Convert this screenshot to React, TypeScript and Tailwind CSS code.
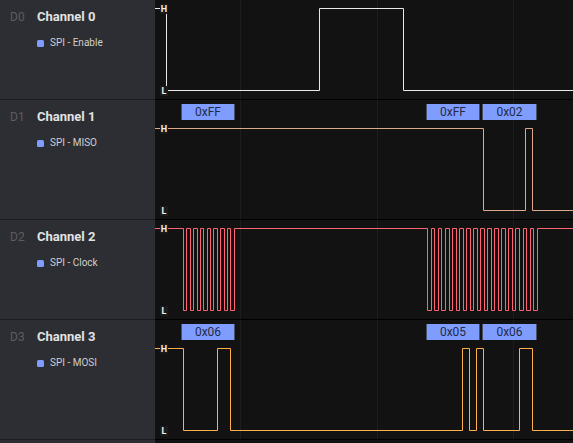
import React from "react";

type Box = { x: number; w: number; label: string };
type Row = {
  id: string;
  name: string;
  proto: string;
  height: number;
  hi: number;
  lo: number;
  color: string;
  toggles: number[];
  boxes: Box[];
};

// clock burst: low pulses of `low` px every `period` px
function clockEdges(start: number, period: number, count: number, low: number) {
  const out: number[] = [];
  for (let i = 0; i < count; i++) {
    out.push(Math.round(start + i * period) + 0.5);
    out.push(Math.round(start + i * period + low) + 0.5);
  }
  return out;
}

const ROWS: Row[] = [
  {
    id: "D0",
    name: "Channel 0",
    proto: "SPI - Enable",
    height: 100,
    hi: 8.5,
    lo: 90.5,
    color: "#e8e8e8",
    toggles: [11.5, 164.5, 248.5],
    boxes: [],
  },
  {
    id: "D1",
    name: "Channel 1",
    proto: "SPI - MISO",
    height: 120,
    hi: 28.5,
    lo: 110.5,
    color: "#dea88c",
    toggles: [328.5, 370.5, 377.5],
    boxes: [
      { x: 26, w: 54, label: "0xFF" },
      { x: 271, w: 54, label: "0xFF" },
      { x: 327, w: 55, label: "0x02" },
    ],
  },
  {
    id: "D2",
    name: "Channel 2",
    proto: "SPI - Clock",
    height: 100,
    hi: 8.5,
    lo: 90.5,
    color: "#ff6474",
    toggles: [...clockEdges(28, 6.75, 8, 3.3), ...clockEdges(272.3, 7.07, 16, 3.3)],
    boxes: [],
  },
  {
    id: "D3",
    name: "Channel 3",
    proto: "SPI - MOSI",
    height: 120,
    hi: 28.5,
    lo: 110.5,
    color: "#ffae50",
    toggles: [28.5, 62.5, 75.5, 307.5, 314.5, 321.5, 328.5, 364.5, 377.5],
    boxes: [
      { x: 26, w: 54, label: "0x06" },
      { x: 271, w: 54, label: "0x05" },
      { x: 327, w: 55, label: "0x06" },
    ],
  },
];

const GRID_X = [85.5, 222.5, 358.5];

function wavePath(row: Row) {
  let high = true;
  let d = `M0 ${row.hi}`;
  for (const x of row.toggles) {
    d += ` H${x}`;
    high = !high;
    d += ` V${high ? row.hi : row.lo}`;
  }
  return d + " H420";
}

function LevelTag({ text, y }: { text: string; y: number }) {
  return (
    <span
      className="absolute left-[5px] w-[8px] h-[10px] bg-[#1a1a1a] text-[9px] leading-[10px] font-bold text-[#f0f0f0] text-center"
      style={{ top: y - 5 }}
    >
      {text}
    </span>
  );
}

function ChannelRow({ row }: { row: Row }) {
  return (
    <div className="flex shrink-0" style={{ height: row.height }}>
      <div className="w-[155px] shrink-0 bg-[#2d2e33] border-b border-[#1b1c1f] pt-[9px] pl-[10px]">
        <div className="flex leading-[16px]">
          <span className="w-[27px] text-[12px] text-[#5c5d62]">{row.id}</span>
          <span className="text-[13px] font-bold text-[#e2e2e2]">{row.name}</span>
        </div>
        <div className="flex items-center gap-[6px] mt-[12px] ml-[27px] leading-[12px]">
          <span className="w-[7px] h-[7px] rounded-[1.5px] bg-[#7f9dff]" />
          <span className="text-[10px] text-[#cfcfcf]">{row.proto}</span>
        </div>
      </div>
      <div className="relative flex-1 bg-[#121212] border-b border-black overflow-hidden">
        <svg className="absolute inset-0" width="100%" height="100%">
          {GRID_X.map((x) => (
            <line key={x} x1={x} x2={x} y1={0} y2={row.height} stroke="#1e1e1e" strokeWidth={1} />
          ))}
          <path d={wavePath(row)} fill="none" stroke={row.color} strokeWidth={1} />
        </svg>
        {row.boxes.map((b, i) => (
          <div
            key={i}
            className="absolute top-[4px] h-[16px] bg-[#7f9dff] border-x border-[#4a5164] text-[12px] leading-[16px] text-[#1f2a46] text-center"
            style={{ left: b.x, width: b.w }}
          >
            {b.label}
          </div>
        ))}
        <LevelTag text="H" y={row.hi} />
        <LevelTag text="L" y={row.lo} />
      </div>
    </div>
  );
}

export default function App() {
  return (
    <div className="h-screen overflow-hidden flex flex-col bg-[#121212] font-['Roboto','Liberation_Sans',sans-serif]">
      {ROWS.map((r) => (
        <ChannelRow key={r.id} row={r} />
      ))}
      {/* next channel, cut off by the window */}
      <div className="flex shrink-0 h-[100px]">
        <div className="w-[155px] shrink-0 bg-[#2d2e33]" />
        <div className="flex-1 bg-[#121212]" />
      </div>
    </div>
  );
}
